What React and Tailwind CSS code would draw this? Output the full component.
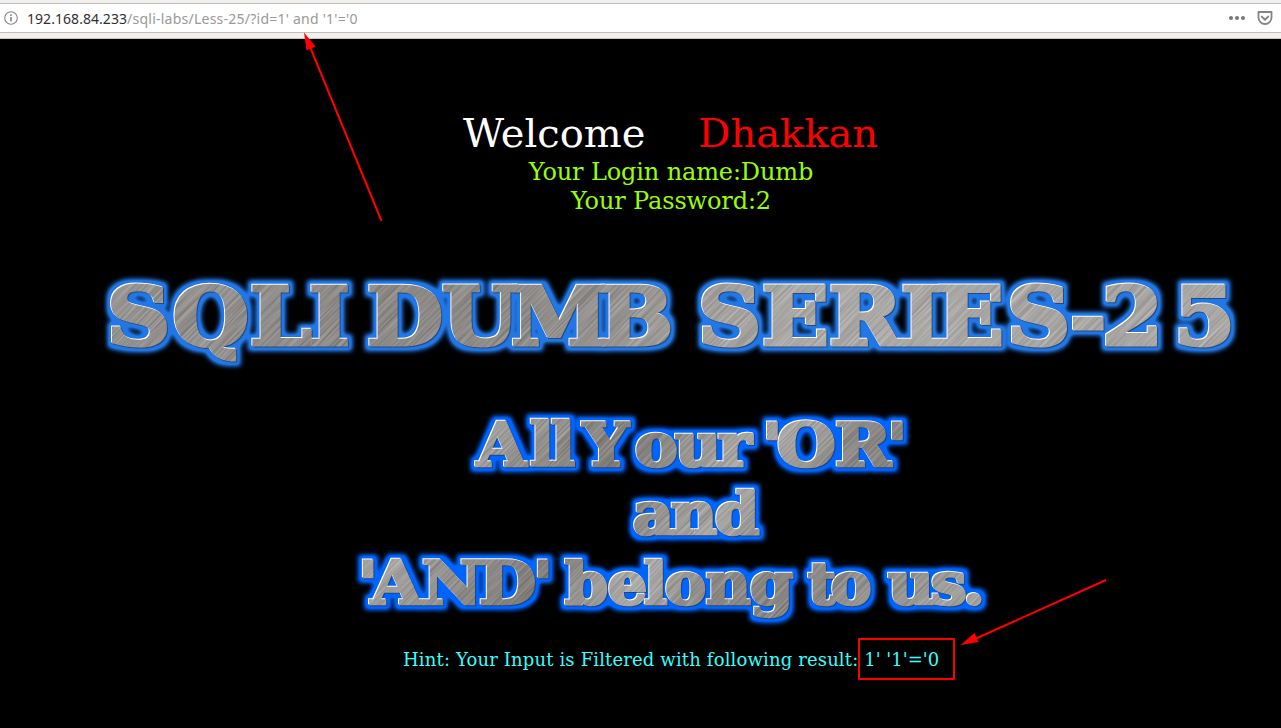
const SERIF = "font-['DejaVu_Serif',serif]";

function Metal({ id, glow, shades }) {
  return (
    <defs>
      <filter id={`${id}-grain`} x="0" y="0" width="100%" height="100%" colorInterpolationFilters="sRGB">
        <feTurbulence type="fractalNoise" baseFrequency="0.015 0.75" numOctaves="2" seed="7" />
        <feColorMatrix values="1.2 0 0 0 0  1.2 0 0 0 -0.01  1.2 0 0 0 -0.02  0 0 0 0 1" />
      </filter>
      <linearGradient id={`${id}-shade`} x1="0" y1="0" x2="1" y2="0.12">
        {shades.map(([o, c]) => (
          <stop key={o} offset={o} stopColor={c} />
        ))}
      </linearGradient>
      <pattern id={`${id}-fill`} width="1281" height="240" patternUnits="userSpaceOnUse">
        <rect width="1281" height="240" fill={`url(#${id}-shade)`} />
        <g transform="rotate(-48 640 120)" opacity="0.28">
          <rect x="-100" y="-600" width="1500" height="1400" filter={`url(#${id}-grain)`} />
        </g>
      </pattern>
      <filter id={`${id}-fx`} filterUnits="userSpaceOnUse" x="0" y="0" width="1281" height="240" colorInterpolationFilters="sRGB">
        <feMorphology in="SourceAlpha" operator="dilate" radius="4" result="fat" />
        <feGaussianBlur in="fat" stdDeviation="2.6" result="soft" />
        <feComponentTransfer in="soft" result="bright">
          <feFuncA type="linear" slope="1.5" />
        </feComponentTransfer>
        <feFlood floodColor={glow} />
        <feComposite in2="bright" operator="in" result="halo" />
        <feOffset in="SourceAlpha" dx="-0.8" dy="-0.8" result="up" />
        <feFlood floodColor="#ffffff" />
        <feComposite in2="up" operator="in" result="light" />
        <feOffset in="SourceAlpha" dx="1" dy="0.8" result="down" />
        <feFlood floodColor="#27384f" floodOpacity="0.7" />
        <feComposite in2="down" operator="in" result="dark" />
        <feMerge>
          <feMergeNode in="halo" />
          <feMergeNode in="dark" />
          <feMergeNode in="light" />
          <feMergeNode in="SourceGraphic" />
        </feMerge>
      </filter>
    </defs>
  );
}

function Word({ y, at, wide = 1.08, size, children }) {
  return (
    <text y={y} x={at.map((x) => (x / wide).toFixed(2)).join(" ")} fontSize={size} transform={`scale(${wide} 1)`}>
      {children}
    </text>
  );
}

function Headline() {
  return (
    <svg width="1281" height="120" viewBox="0 0 1281 120" className="block font-['DejaVu_Serif',serif] font-bold">
      <Metal
        id="h"
        glow="#2277e6"
        shades={[[0, "#9c9a98"], [0.3, "#85827f"], [0.42, "#8e8b88"], [0.6, "#b4b2af"], [0.8, "#aaa8a5"], [1, "#b8b6b4"]]}
      />
      <g fill="url(#h-fill)" stroke="url(#h-fill)" strokeWidth="3.2" fontSize="80" filter="url(#h-fx)">
        <Word y={84.5} wide={1.1} at={[107, 172.5, 250, 309]}>SQLI</Word>
        <Word y={84.5} wide={1.1} at={[367, 442, 511, 599]}>DUMB</Word>
        <Word y={84.5} wide={1.1} at={[698, 762, 829, 901, 937, 1007, 1070, 1102, 1174]}>SERIES-25</Word>
      </g>
    </svg>
  );
}

function Motto() {
  return (
    <svg width="1281" height="240" viewBox="0 0 1281 240" className="block font-['DejaVu_Serif',serif] font-bold">
      <Metal
        id="m"
        glow="#0064ff"
        shades={[[0, "#aaa8a6"], [0.36, "#a5a3a0"], [0.42, "#8a8784"], [0.47, "#77746f"], [0.55, "#b0aeab"], [0.61, "#827f7c"], [0.69, "#85827f"], [0.75, "#a5a3a0"], [1, "#a5a3a0"]]}
      />
      <g fill="url(#m-fill)" stroke="url(#m-fill)" strokeWidth="2.6" fontSize="60" filter="url(#m-fx)">
        <Word y={66} size={59} at={[477, 530, 551]}>All</Word>
        <Word y={66} size={59} wide={1.09} at={[583, 635, 675, 718]}>Your</Word>
        <Word y={66} wide={1.13} at={[762, 777, 835, 887]}>'OR'</Word>
        <Word y={134.5} size={57} wide={1.12} at={[633, 671, 715]}>and</Word>
        <Word y={204} wide={1.1} at={[358, 371, 422, 479, 533]}>'AND'</Word>
        <Word y={204} size={58} wide={1.07} at={[565, 608, 644, 665, 706, 750]}>belong</Word>
        <Word y={204} size={57} wide={1.07} at={[808, 831]}>to</Word>
        <Word y={204} size={57} wide={1.12} at={[888, 931, 963]}>us.</Word>
      </g>
    </svg>
  );
}

export default function App() {
  return (
    <div className="relative h-[728px] w-[1281px] overflow-hidden bg-black">
      <div className="h-[39px] border-b border-[#c9c7c4] bg-[#f1f0ee] pt-[3px]">
        <div className="flex h-[30px] items-center border-y border-[#c0bdb9] bg-white pl-1 pr-2">
          <svg width="14" height="14" viewBox="0 0 14 14" fill="none" stroke="#858585">
            <circle cx="7" cy="7" r="6.3" strokeWidth="1.1" />
            <path d="M7 6v4.6M7 3.2v1.7" strokeWidth="1.6" />
          </svg>
          <div className="ml-[9px] flex-1 whitespace-pre pt-[2px] font-['Noto_Sans',sans-serif] text-[14px] leading-7 text-[#999]">
            <span className="tracking-[0.05px] text-[#303030]">192.168.84.233</span>
            <span className="tracking-[0.24px]">/sqli-labs/Less-25/?id=1' and '1'='0</span>
          </div>
          <svg width="16" height="6" viewBox="0 0 16 6" fill="#777" className="mr-3">
            <circle cx="2" cy="3" r="2" />
            <circle cx="8" cy="3" r="2" />
            <circle cx="14" cy="3" r="2" />
          </svg>
          <svg width="16" height="15" viewBox="0 0 16 15" fill="none" stroke="#858585" strokeWidth="2" strokeLinecap="round" strokeLinejoin="round">
            <path d="M1.5 1h13v5.5a6.5 6.5 0 0 1-13 0z" strokeWidth="1.8" />
            <path d="M4.8 5.6 8 8.7l3.2-3.1" />
          </svg>
        </div>
      </div>

      <div className={`${SERIF} pl-[60px] pt-[71px] text-center text-[24px] leading-[29px] text-[#99ff00]`}>
        <div className="mb-px flex h-[47px] items-center justify-center gap-[53px] text-[40px] leading-[47px]">
          <span className="text-white">Welcome</span>
          <span className="text-[#ff0000]">Dhakkan</span>
        </div>
        <div className="pl-px tracking-[-0.13px]">Your Login name:Dumb</div>
        <div className="pl-px tracking-[-0.13px]">Your Password:2</div>
      </div>

      <div className="mt-[45px]">
        <Headline />
      </div>
      <div className="mt-[19px]">
        <Motto />
      </div>
      <div className={`${SERIF} mt-px flex h-[36px] items-center whitespace-pre pl-[403px] text-[18px] text-[#33ffff]`}>
        <span className="tracking-[0.15px]">Hint: Your Input is Filtered with following result: </span>
        <span>1' '1'='0</span>
      </div>

      <div className="absolute left-[858px] top-[638px] h-[42px] w-[97px] rounded-[1px] border-2 border-[#ff0000]" />
      <svg width="1281" height="728" className="pointer-events-none absolute left-0 top-0" fill="#ff0000" stroke="#ff0000">
        <path d="M381.500 221 310.500 48M1106 580 976 638.500" strokeWidth="2" />
        <path d="M304 32.500 315.500 46.500 306.500 50.500zM960.500 645 974.500 633 978.500 642z" stroke="none" />
      </svg>
    </div>
  );
}
